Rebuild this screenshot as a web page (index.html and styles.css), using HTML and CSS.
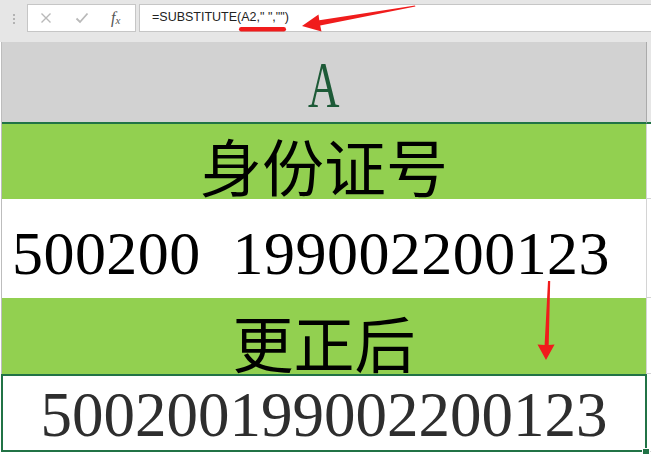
FILE: index.html
```html
<!DOCTYPE html>
<html lang="zh">
<head>
  <meta charset="UTF-8">
  <title>SUBSTITUTE</title>
  <link rel="stylesheet" href="styles.css">
</head>
<body>
  <div class="formula-bar">
    <div class="grip"><span></span><span></span><span></span></div>
    <div class="tools">
      <svg class="tool" width="12" height="12" viewBox="0 0 12 12"><path d="M1.5 1.5 L10.5 10.5 M10.5 1.5 L1.5 10.5" stroke="#b9b9b9" stroke-width="1.4" fill="none"/></svg>
      <svg class="tool" width="14" height="12" viewBox="0 0 14 12"><path d="M1.5 6.5 L5 10 L12.5 1.5" stroke="#b9b9b9" stroke-width="1.8" fill="none"/></svg>
      <span class="fx">f<sub>x</sub></span>
    </div>
    <div class="formula">=SUBSTITUTE(A2," ","")</div>
  </div>

  <div class="sheet">
    <div class="row head">
      <div class="cell"><span class="col-name">A</span></div>
      <div class="rest"></div>
    </div>
    <div class="row green">
      <div class="cell cjk">身份证号</div>
      <div class="rest"></div>
    </div>
    <div class="row plain">
      <div class="cell num left">500200  199002200123</div>
      <div class="rest"></div>
    </div>
    <div class="row green short">
      <div class="cell cjk">更正后</div>
      <div class="rest"></div>
    </div>
    <div class="row selected">
      <div class="cell num">500200199002200123</div>
      <div class="rest"></div>
    </div>
  </div>

  <div class="fill-handle"></div>

  <svg class="marks" width="651" height="454" viewBox="0 0 651 454">
    <rect x="239" y="27" width="47" height="4.5" rx="2.2" fill="#f01c1c"/>
    <polygon points="302,26 318.5,14.5 319.3,20.3 415,5.4 415.4,6.6 320.2,25.6 321.5,31.5" fill="#f01c1c"/>
    <polygon points="546,360 537.5,344.5 544.6,345 548,281 550.2,281 548.7,345 554.6,344.5" fill="#f01c1c"/>
  </svg>
</body>
</html>
```

FILE: styles.css
```css
body {
  margin: 0;
  width: 651px;
  height: 454px;
  overflow: hidden;
  position: relative;
  background: #fff;
  font-family: "Liberation Serif", serif;
}
.formula-bar {
  display: flex;
  height: 42px;
  padding-top: 4px;
  box-sizing: border-box;
  background: #e6e6e6;
}
.grip {
  width: 27px;
  display: flex;
  flex-direction: column;
  align-items: center;
  gap: 2px;
  padding-top: 10px;
  box-sizing: border-box;
}
.grip span {
  width: 2px;
  height: 2px;
  background: #b3b3b3;
}
.tools {
  width: 109px;
  height: 28px;
  box-sizing: border-box;
  border: 1px solid #c6c6c6;
  background: #fff;
  display: flex;
  align-items: center;
  padding-left: 12px;
}
.tool {
  margin-right: 23px;
}
.tool + .tool {
  margin-right: 22px;
}
.fx {
  font-family: "Liberation Serif", serif;
  font-style: italic;
  font-size: 16px;
  color: #555;
  line-height: 1;
}
.fx sub {
  font-size: 11px;
  vertical-align: -1px;
}
.formula {
  flex: 1;
  margin-left: 3px;
  height: 28px;
  box-sizing: border-box;
  border: 1px solid #c6c6c6;
  border-right: none;
  background: #fff;
  padding-left: 12px;
  font-family: "Liberation Sans", Arial, sans-serif;
  font-size: 12.5px;
  line-height: 25px;
  color: #222;
}
.sheet {
  margin-left: 1px;
  border-left: 1px solid #bdbdbd;
}
.row {
  display: flex;
}
.cell {
  width: 644px;
  flex: none;
  box-sizing: border-box;
  display: flex;
  align-items: center;
  justify-content: center;
}
.rest {
  flex: 1;
  border-left: 1px solid #d4d4d4;
  border-bottom: 1px solid #d4d4d4;
  box-sizing: border-box;
}
.head {
  height: 82px;
}
.head .cell {
  background: #d2d2d2;
  border-bottom: 2px solid #217346;
}
.head .rest {
  background: #e6e6e6;
  border-left-color: #ababab;
  border-bottom: 2px solid #217346;
}
.col-name {
  font-size: 66px;
  color: #1d5a37;
  transform: scaleX(0.66);
  line-height: 1;
  padding-top: 6px;
}
.green {
  height: 75px;
}
.green.short {
  height: 76px;
}
.green .cell {
  background: #92d050;
}
.cjk {
  font-family: "Noto Sans CJK SC", sans-serif;
  font-size: 62px;
  line-height: 1;
  padding-top: 6px;
  color: #000;
}
.short .cjk {
  font-size: 61px;
  padding-top: 10px;
}
.plain {
  height: 99px;
}
.num {
  font-size: 62px;
  line-height: 1;
  white-space: pre;
  color: #000;
  padding-top: 8px;
}
.num.left {
  justify-content: flex-start;
  padding-left: 10px;
  letter-spacing: 0.45px;
}
.selected {
  height: 78px;
}
.selected .cell {
  margin-left: -1px;
  width: 646px;
  border: 2px solid #217346;
  color: #2e2e2e;
  font-size: 63px;
  padding-top: 5px;
}
.selected .rest {
  border-left: none;
}
.fill-handle {
  position: absolute;
  left: 642px;
  top: 448px;
  width: 6px;
  height: 6px;
  background: #217346;
  border: 1px solid #fff;
}
.marks {
  position: absolute;
  left: 0;
  top: 0;
  pointer-events: none;
}
```
